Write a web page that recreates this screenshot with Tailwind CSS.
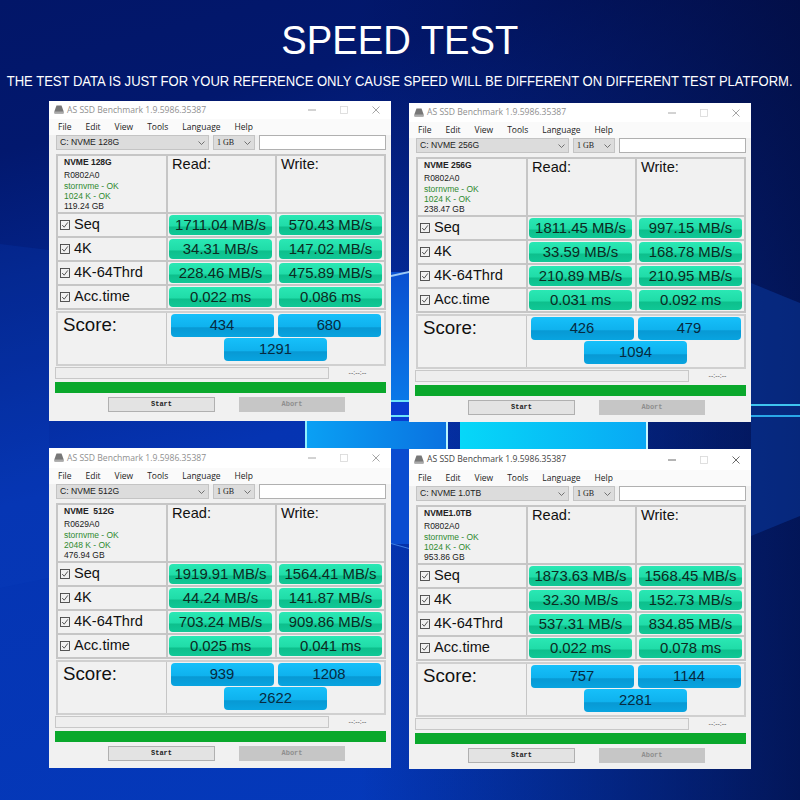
<!DOCTYPE html>
<html lang="en">
<head>
  <meta charset="UTF-8">
  <meta name="viewport" content="width=device-width, initial-scale=1.0">
  <title>Speed Test</title>
  <script src="https://cdn.jsdelivr.net/npm/@tailwindcss/browser@4"></script>
</head>
<body class="font-['Liberation_Sans',Arial,sans-serif]">
  <div class="relative w-[800px] h-[800px] overflow-hidden bg-[linear-gradient(165deg,#021668_0%,#02186e_15%,#0534b2_50%,#043abc_100%)]">

    <!-- Wallpaper -->
    <svg class="absolute inset-0" width="800" height="800" viewBox="0 0 800 800">
      <defs>
        <linearGradient id="darkRight" x1="0" y1="0" x2="1" y2="0">
          <stop offset="0.45" stop-color="#020a38" stop-opacity="0"/>
          <stop offset="1" stop-color="#020a38" stop-opacity="0.75"/>
        </linearGradient>
        <linearGradient id="gapBlue" x1="0" y1="0" x2="0" y2="1">
          <stop offset="0" stop-color="#0a4fd0"/>
          <stop offset="1" stop-color="#0a78e8"/>
        </linearGradient>
        <linearGradient id="paneLeft" x1="0" y1="0" x2="1" y2="0">
          <stop offset="0" stop-color="#0aa0f4"/>
          <stop offset="1" stop-color="#0a72e0"/>
        </linearGradient>
        <linearGradient id="paneRight" x1="0" y1="0" x2="1" y2="0">
          <stop offset="0" stop-color="#06d8f8"/>
          <stop offset="1" stop-color="#09a8f4"/>
        </linearGradient>
      </defs>
      <rect width="800" height="800" fill="url(#darkRight)"/>
      <polygon points="751,283 800,303 800,516 751,536" fill="#0a3fa8" opacity="0.45"/>
      <polygon points="0,244 49,250 49,578 0,588" fill="#0a3fc0" opacity="0.2"/>
      <rect x="391" y="272" width="18" height="129" fill="url(#gapBlue)"/>
      <polygon points="391,275 409,271 409,273 391,277" fill="#9cc8f4"/>
      <rect x="391" y="401" width="18" height="47" fill="#0a3bd0"/>
      <rect x="391" y="400" width="18" height="2" fill="#6fe4f8"/>
      <rect x="391" y="415" width="18" height="2" fill="#6fe4f8"/>
      <rect x="391" y="448" width="18" height="96" fill="#0a4cd0"/>
      <polygon points="391,543 409,548 409,549 391,544" fill="#3f80e4"/>
      <rect x="751" y="404" width="49" height="2" fill="#3fc4ee"/>
      <rect x="751" y="415" width="49" height="2" fill="#2aa8e8"/>
      <rect x="307" y="421" width="139" height="28" fill="url(#paneLeft)"/>
      <rect x="305" y="421" width="2" height="28" fill="#8ef0fc"/>
      <rect x="446" y="421" width="2" height="28" fill="#b8f4fc"/>
      <rect x="460" y="421" width="186" height="28" fill="url(#paneRight)"/>
      <rect x="646" y="421" width="2" height="28" fill="#c8f8fc"/>
    </svg>

    <div class="relative flex flex-col">
      <div class="h-[79px] pt-[17px] flex justify-center">
        <h1 class="shrink-0 scale-x-[0.92] text-white text-[41.5px] leading-[46px] whitespace-nowrap">SPEED TEST</h1>
      </div>
      <div class="h-[22px] flex justify-center">
        <p class="shrink-0 scale-x-[0.932] text-white text-[14px] leading-[5px] whitespace-nowrap">THE TEST DATA IS JUST FOR YOUR REFERENCE ONLY CAUSE SPEED WILL BE DIFFERENT ON DIFFERENT TEST PLATFORM.</p>
      </div>
      <div id="windows" class="grid grid-cols-[342px_342px] gap-x-[18px] pl-[49px]"></div>
    </div>
  </div>

  <script>
    const tests = [
      {
        wrap: 'mt-0 h-[320px]', title: 'h-[18px]', titleText: 'text-[#8f8f8f]',
        drive: 'C: NVME 128G', info: ['NVME 128G', 'R0802A0', 'stornvme - OK', '1024 K - OK', '119.24 GB'],
        rows: [['Seq', '1711.04 MB/s', '570.43 MB/s'], ['4K', '34.31 MB/s', '147.02 MB/s'], ['4K-64Thrd', '228.46 MB/s', '475.89 MB/s'], ['Acc.time', '0.022 ms', '0.086 ms']],
        score: ['434', '680', '1291']
      },
      {
        wrap: 'mt-[2px] h-[319px]', title: 'h-[19px]', titleText: 'text-[#8f8f8f]',
        drive: 'C: NVME 256G', info: ['NVME 256G', 'R0802A0', 'stornvme - OK', '1024 K - OK', '238.47 GB'],
        rows: [['Seq', '1811.45 MB/s', '997.15 MB/s'], ['4K', '33.59 MB/s', '168.78 MB/s'], ['4K-64Thrd', '210.89 MB/s', '210.95 MB/s'], ['Acc.time', '0.031 ms', '0.092 ms']],
        score: ['426', '479', '1094']
      },
      {
        wrap: 'mt-[26px] h-[320px]', title: 'h-[20px]', titleText: 'text-[#8f8f8f]',
        drive: 'C: NVME 512G', info: ['NVME  512G', 'R0629A0', 'stornvme - OK', '2048 K - OK', '476.94 GB'],
        rows: [['Seq', '1919.91 MB/s', '1564.41 MB/s'], ['4K', '44.24 MB/s', '141.87 MB/s'], ['4K-64Thrd', '703.24 MB/s', '909.86 MB/s'], ['Acc.time', '0.025 ms', '0.041 ms']],
        score: ['939', '1208', '2622']
      },
      {
        wrap: 'mt-[27px] h-[320px]', title: 'h-[21px]', titleText: 'text-[#444444]',
        drive: 'C: NVME 1.0TB', info: ['NVME1.0TB', 'R0802A0', 'stornvme - OK', '1024 K - OK', '953.86 GB'],
        rows: [['Seq', '1873.63 MB/s', '1568.45 MB/s'], ['4K', '32.30 MB/s', '152.73 MB/s'], ['4K-64Thrd', '537.31 MB/s', '834.85 MB/s'], ['Acc.time', '0.022 ms', '0.078 ms']],
        score: ['757', '1144', '2281']
      }
    ];

    const greenBar = 'flex-1 rounded-[4px] flex items-center justify-center text-[14.9px] text-[#0b2b22] bg-[linear-gradient(#2ae8b4_0%,#20dca8_55%,#0dbf8c_60%,#10c896_100%)]';
    const blueBar = 'w-[103px] h-[23px] rounded-[4px] flex items-center justify-center text-[14.8px] text-[#062a40] bg-[linear-gradient(#16c0fa_0%,#0fb2ee_55%,#0899d4_60%,#08a4e0_100%)]';
    const cell = 'border border-[#c6c6c6]';

    function chevron() {
      return '<svg width="7" height="4" viewBox="0 0 7 4" fill="none" stroke="#555" stroke-width="0.8"><path d="M0.5 0.5 L3.5 3.5 L6.5 0.5"/></svg>';
    }

    function checkbox() {
      return '<svg width="10" height="10" viewBox="0 0 10 10" fill="none" stroke="#444" stroke-width="0.9" class="shrink-0"><rect x="0.5" y="0.5" width="9" height="9"/><path d="M2.2 5 L4.2 7.2 L7.8 2.4"/></svg>';
    }

    function renderRow(r) {
      return `
        <div class="flex h-[24px] first:h-[25px]">
          <div class="${cell} w-[110px] flex items-center gap-[4px] pl-[2px] text-[14.6px] text-[#111111]">${checkbox()}<span>${r[0]}</span></div>
          <div class="${cell} w-[109px] flex py-px pl-px pr-[3px]">
            <div class="${greenBar}">${r[1]}</div>
          </div>
          <div class="${cell} w-[109px] flex py-px px-[2px]">
            <div class="${greenBar}">${r[2]}</div>
          </div>
        </div>`;
    }

    function renderWindow(t) {
      return `
      <section class="${t.wrap} w-[342px] flex flex-col bg-[#f1f1f1]">
        <header class="${t.title} shrink-0 flex items-center justify-between bg-white pl-[5px] pr-[11px]">
          <div class="flex items-center gap-[3px]">
            <svg width="10" height="9" viewBox="0 0 10 9"><path d="M2.5 0.5 H7.5 L9.5 6 V8.5 H0.5 V6 Z" fill="#777"/><rect x="0.5" y="6.5" width="9" height="2" fill="#aaa"/></svg>
            <span class="font-['Open_Sans',sans-serif] text-[8.6px] ${t.titleText} whitespace-nowrap">AS SSD Benchmark 1.9.5986.35387</span>
          </div>
          <div class="flex items-center gap-[24px] ${t.titleText}">
            <svg width="8" height="8" viewBox="0 0 8 8" stroke="currentColor" stroke-width="0.8"><path d="M0 4 H8"/></svg>
            <svg width="8" height="8" viewBox="0 0 8 8" fill="none" stroke="#d8d8d8" stroke-width="0.8"><rect x="0.5" y="0.5" width="7" height="7"/></svg>
            <svg width="8" height="8" viewBox="0 0 8 8" stroke="currentColor" stroke-width="0.8"><path d="M0.5 0.5 L7.5 7.5 M7.5 0.5 L0.5 7.5"/></svg>
          </div>
        </header>

        <nav class="h-[16px] shrink-0 flex items-center gap-[14px] pl-[9px] font-['Open_Sans',sans-serif] text-[8.5px] text-[#222222] bg-[#fafafa]">
          <span>File</span><span>Edit</span><span>View</span><span>Tools</span><span>Language</span><span>Help</span>
        </nav>

        <div class="h-[15px] shrink-0 flex gap-[4px] pl-[7px] pr-[5px]">
          <div class="w-[153px] flex items-center justify-between px-[3px] bg-[#dcdcdc] border border-[#c4c4c4] text-[8.6px] text-[#222222]"><span>${t.drive}</span>${chevron()}</div>
          <div class="w-[42px] flex items-center justify-between px-[3px] bg-[#dcdcdc] border border-[#c4c4c4] font-['Liberation_Serif',serif] text-[8px] text-[#222222]"><span>1 GB</span>${chevron()}</div>
          <div class="flex-1 bg-white border border-[#b0b0b0]"></div>
        </div>

        <div class="mt-[4px] ml-[7px] w-[330px] flex flex-col border border-[#c6c6c6]">
          <div class="flex h-[58px]">
            <div class="${cell} w-[110px] pl-[6px] pt-[1px] text-[8.5px] leading-[10px] text-[#222222]">
              <div class="font-semibold mb-[3px]">${t.info[0].replace('  ', '&nbsp; ')}</div>
              <div class="mb-[1px]">${t.info[1]}</div>
              <div class="text-[#2f8a2f]">${t.info[2]}</div>
              <div class="text-[#2f8a2f]">${t.info[3]}</div>
              <div>${t.info[4]}</div>
            </div>
            <div class="${cell} w-[109px] pl-[4px] text-[14.6px] leading-[16px] text-[#111111]">Read:</div>
            <div class="${cell} w-[109px] pl-[4px] text-[14.6px] leading-[16px] text-[#111111]">Write:</div>
          </div>
          ${t.rows.map(renderRow).join('')}
        </div>

        <div class="mt-[1px] ml-[7px] w-[330px] h-[55px] flex border-2 border-[#d0d0d0]">
          <div class="w-[109px] pl-[5px] pt-[1px] text-[18.7px] leading-[22px] text-[#111111] border-r border-[#c6c6c6]">Score:</div>
          <div class="flex-1 flex flex-col items-center pt-[1px]">
            <div class="flex gap-[4px]">
              <div class="${blueBar}">${t.score[0]}</div>
              <div class="${blueBar}">${t.score[1]}</div>
            </div>
            <div class="${blueBar} mt-[1px]">${t.score[2]}</div>
          </div>
        </div>

        <div class="mt-[1px] h-[12px] shrink-0 flex items-center pl-[6px]">
          <div class="w-[274px] h-full bg-[#eeeeee] border border-[#c8c8c8]"></div>
          <div class="w-[57px] text-center text-[7px] text-[#555555]">--:--:--</div>
        </div>

        <div class="mt-[3px] ml-[6px] w-[331px] h-[11px] shrink-0 bg-[#0aa82c]"></div>

        <div class="mt-[4px] h-[15px] shrink-0 flex gap-[24px] pl-[59px]">
          <button class="w-[107px] bg-[#e3e3e3] border border-[#b0b0b0] font-['Liberation_Mono',monospace] font-bold text-[7px] text-[#222222]">Start</button>
          <button class="w-[106px] bg-[#c6c6c6] font-['Liberation_Mono',monospace] font-bold text-[7px] text-[#8e8e8e]">Abort</button>
        </div>
      </section>`;
    }

    document.getElementById('windows').innerHTML = tests.map(renderWindow).join('');
  </script>
</body>
</html>
